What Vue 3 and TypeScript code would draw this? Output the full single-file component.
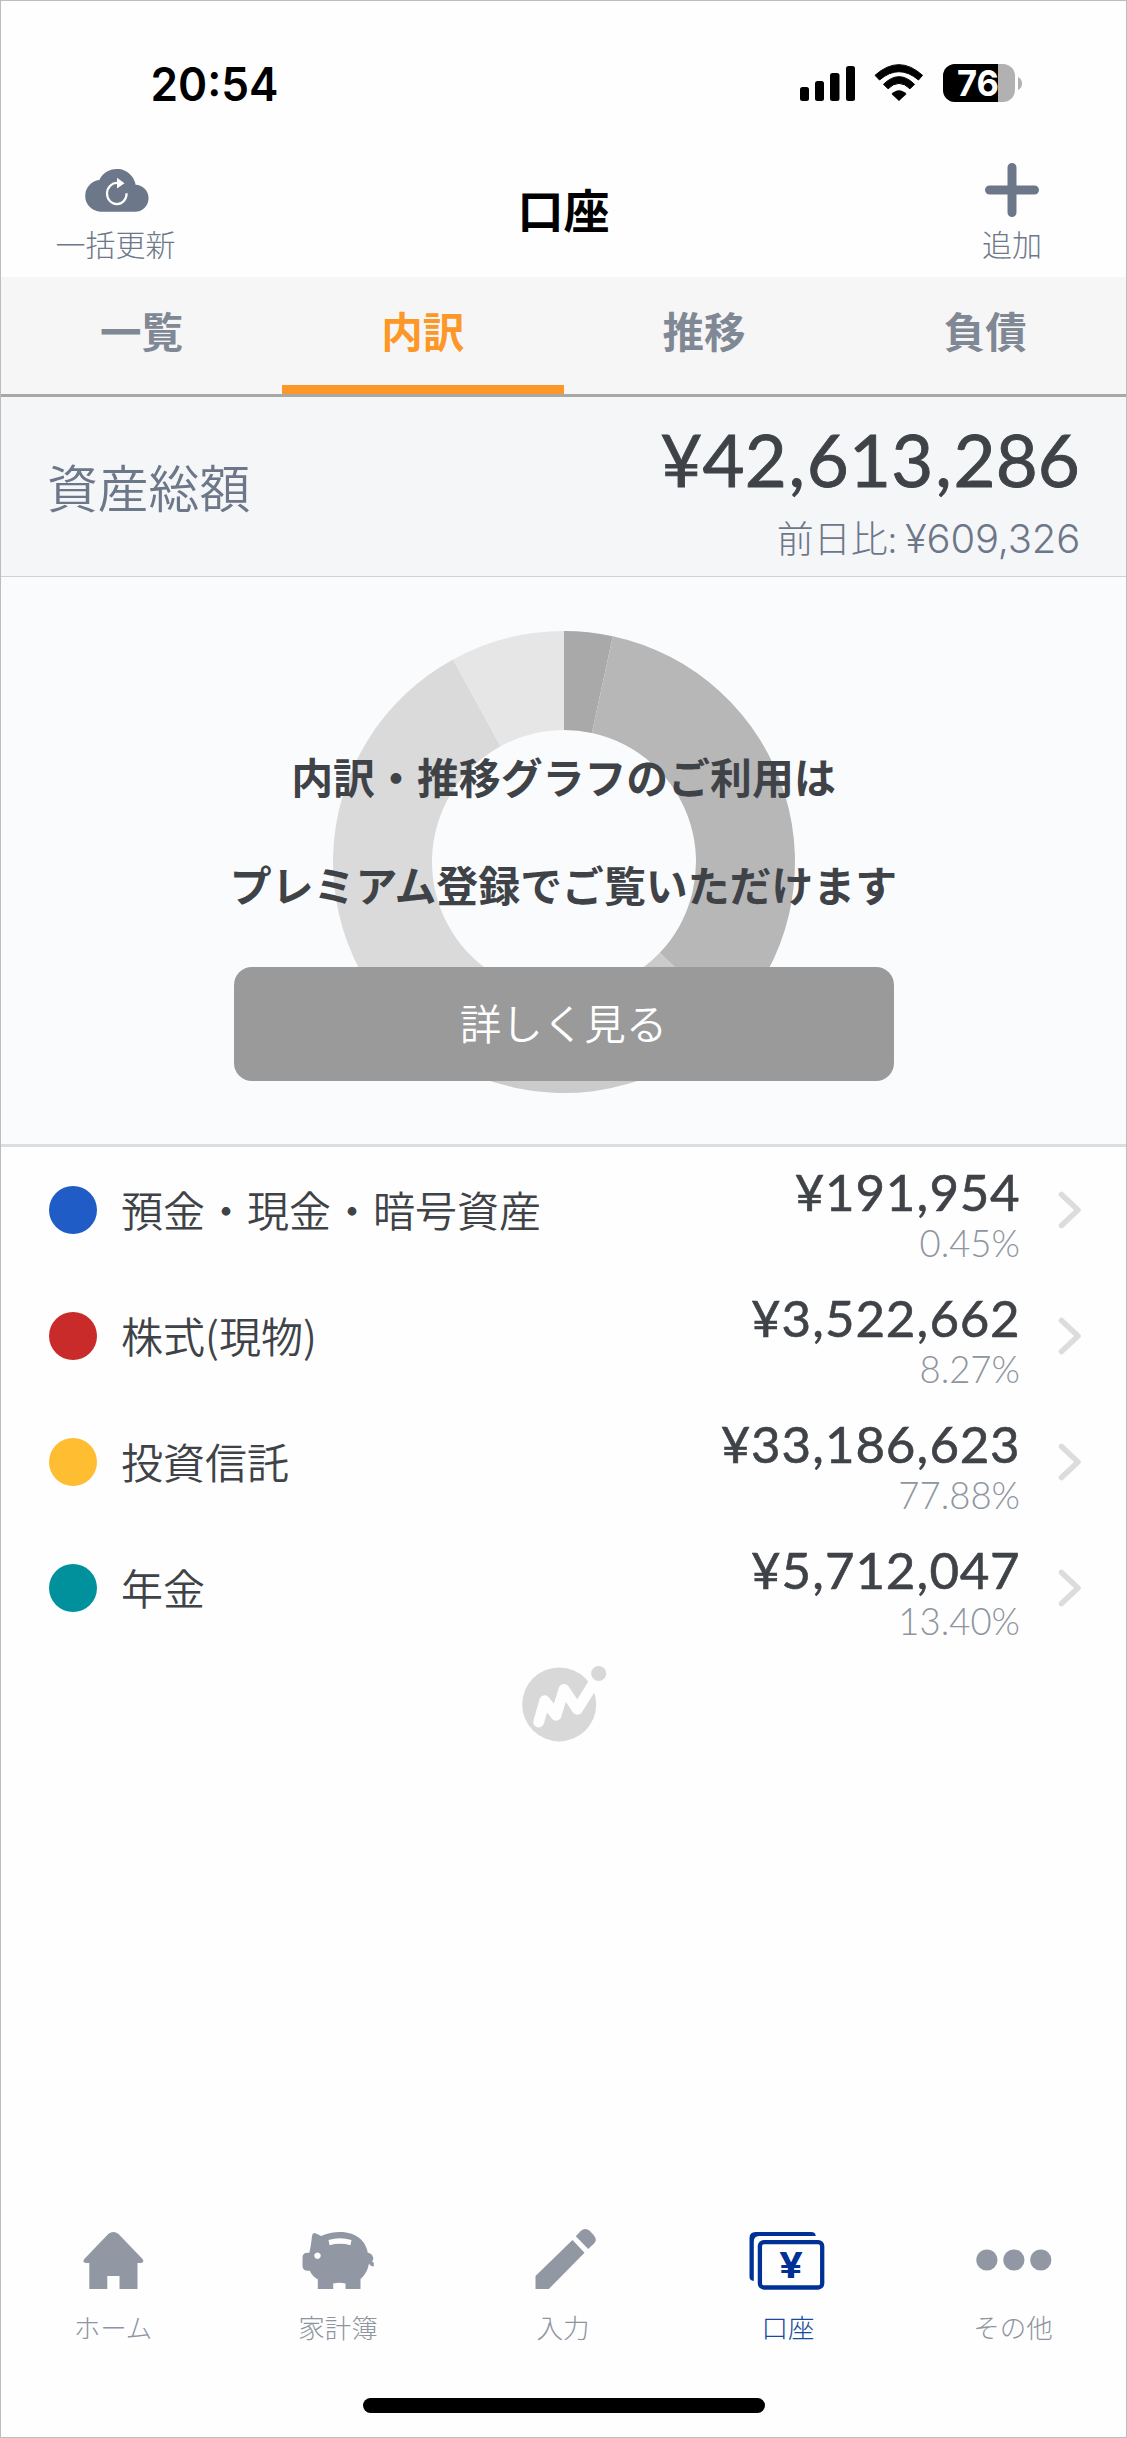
<script setup lang="ts">
interface Asset { name: string; amount: string; rate: string; color: string }

const tabs: string[] = ['一覧', '内訳', '推移', '負債']
const activeTab = '内訳'

const assets: Asset[] = [
  { name: '預金・現金・暗号資産', amount: '¥191,954', rate: '0.45%', color: '#205cc6' },
  { name: '株式(現物)', amount: '¥3,522,662', rate: '8.27%', color: '#c92a2a' },
  { name: '投資信託', amount: '¥33,186,623', rate: '77.88%', color: '#ffbe32' },
  { name: '年金', amount: '¥5,712,047', rate: '13.40%', color: '#00919d' },
]

// Centre of every glyph, counted back from the right edge: digits share one pitch, commas a narrower one
function glyphCentres(text: string, right: number, digit: number, comma: number): string {
  let edge = right
  const out: string[] = []
  for (const ch of [...text].reverse()) {
    const w = ch === ',' ? comma : digit
    out.unshift((edge - w / 2).toFixed(1))
    edge -= w
  }
  return out.join(' ')
}

function ring(from: number, to: number, outer = 231, inner = 132): string {
  const p = (deg: number, r: number) => {
    const a = (deg * Math.PI) / 180
    return `${(231 + r * Math.sin(a)).toFixed(2)} ${(231 - r * Math.cos(a)).toFixed(2)}`
  }
  const large = to - from > 180 ? 1 : 0
  return `M${p(from, outer)}A${outer} ${outer} 0 ${large} 1 ${p(to, outer)}L${p(to, inner)}A${inner} ${inner} 0 ${large} 0 ${p(from, inner)}Z`
}
const slices = [
  { d: ring(0, 12.2), fill: '#a9a9a9' },
  { d: ring(12.2, 133.5), fill: '#b7b7b7' },
  { d: ring(133.5, 212), fill: '#cbcbcb' },
  { d: ring(212, 331.3), fill: '#dadada' },
  { d: ring(331.3, 360), fill: '#e6e6e6' },
]
</script>

<template>
  <div class="screen">
    <div class="status">
      <svg class="clock" width="135" height="50" viewBox="0 0 135 50">
        <text x="0.500" y="40" textLength="128" lengthAdjust="spacingAndGlyphs">20:54</text>
      </svg>
      <svg class="signals" width="224" height="44" viewBox="0 0 224 44">
        <rect x="0" y="25" width="9" height="14" rx="2.5" />
        <rect x="15" y="19" width="9" height="20" rx="2.5" />
        <rect x="30" y="11" width="9.5" height="28" rx="2.5" />
        <rect x="46" y="4" width="9" height="35" rx="2.5" />
        <path d="M75 13.300Q99 -8 122.500 13.300L118.500 18Q99 1.400 79.500 18Z" stroke="#000" stroke-width="1" stroke-linejoin="round" />
        <path d="M83.500 22.300Q99 7 114.500 22.300L110 26.800Q99 16 88 26.800Z" stroke="#000" stroke-width="1" stroke-linejoin="round" />
        <path d="M91.500 32Q99 24.500 106.500 32L99 39Z" />
        <clipPath id="battery"><rect x="143" y="2" width="72" height="38" rx="12" /></clipPath>
        <g clip-path="url(#battery)">
          <rect x="143" y="2" width="72" height="38" fill="#b1b1b1" />
          <rect x="143" y="2" width="55" height="38" />
        </g>
        <path d="M218 15Q222 17 222 21.500Q222 26 218 28Z" fill="#b1b1b1" />
        <text x="157" y="34" class="charge" textLength="42" lengthAdjust="spacingAndGlyphs">76</text>
      </svg>
    </div>

    <header class="header">
      <div class="action left">
        <svg width="64" height="56" viewBox="0 0 64 56">
          <path d="M16.500 49.700A15.800 15.900 0 0 1 15.300 18A19.200 19.200 0 0 1 51.600 22.700A13.500 13.500 0 0 1 50.500 49.700Z" fill="#6d778a" />
          <path d="M33.500 21A9.800 10.600 0 1 0 42.600 31.300" fill="none" stroke="#fff" stroke-width="2.200" />
          <path d="M33 15.700L40.500 21.200L33 26.500Z" fill="#fff" />
        </svg>
        <span>一括更新</span>
      </div>
      <h1>口座</h1>
      <div class="action right">
        <svg width="64" height="56" viewBox="0 0 64 56">
          <path d="M32 5.500V50.500M9.500 28H54.500" stroke="#6d778a" stroke-width="9" stroke-linecap="round" />
        </svg>
        <span>追加</span>
      </div>
    </header>

    <nav class="tabs">
      <div v-for="t in tabs" :key="t" class="tab" :class="{ active: t === activeTab }">{{ t }}</div>
    </nav>

    <section class="total">
      <div class="total-label">資産総額</div>
      <div class="total-values">
        <svg width="422" height="84" viewBox="0 0 422 84">
          <text class="total-amount" :x="glyphCentres('¥42,613,286', 422, 42.2, 20)" y="71">¥42,613,286</text>
        </svg>
        <div class="diff">前日比: <span>¥609,326</span></div>
      </div>
    </section>

    <section class="chart">
      <svg class="donut" width="462" height="462" viewBox="0 0 462 462">
        <path v-for="(s, i) in slices" :key="i" :d="s.d" :fill="s.fill" />
      </svg>
      <div class="promo">
        <p>内訳・推移グラフのご利用は</p>
        <p>プレミアム登録でご覧いただけます</p>
        <button type="button">詳しく見る</button>
      </div>
    </section>

    <main class="assets">
      <div v-for="a in assets" :key="a.name" class="asset">
        <i class="dot" :style="{ background: a.color }"></i>
        <div class="name">{{ a.name }}</div>
        <div class="figures">
          <svg width="300" height="58" viewBox="0 0 300 58">
            <text class="amount" :x="glyphCentres(a.amount, 300, 30.3, 13.4)" y="48.500">{{ a.amount }}</text>
          </svg>
          <div class="rate">{{ a.rate }}</div>
        </div>
        <svg class="chevron" width="24" height="38" viewBox="0 0 24 38">
          <path d="M3.500 3.500L20 19L3.500 34.500" fill="none" stroke="#dcdcdc" stroke-width="5.500" stroke-linecap="round" stroke-linejoin="round" />
        </svg>
      </div>
      <svg class="mark" width="88" height="78" viewBox="0 0 88 78">
        <circle cx="38.200" cy="37.400" r="37" fill="#d8d8d8" />
        <path d="M17.700 55L23.700 33.700L35 48.300L43 22.300L56.300 42.300L76 11" fill="none" stroke="#fefefe" stroke-width="10.800" stroke-linecap="round" stroke-linejoin="round" />
        <circle cx="77.700" cy="6.500" r="7.600" fill="#d8d8d8" />
      </svg>
    </main>

    <footer class="bottom">
      <div class="item">
        <svg width="84" height="66" viewBox="0 0 84 66">
          <path d="M36.300 2Q41.400 -2 46.500 2L70.500 27Q73 31 68.500 31H65.500V57H47.500V44H35.300V57H17.300V31H14.300Q9.800 31 12.300 27Z" />
        </svg>
        <span>ホーム</span>
      </div>
      <div class="item">
        <svg width="84" height="66" viewBox="0 0 84 66">
          <path fill-rule="evenodd" d="M15 4Q15.500 0 19 1.500L24.200 4C42 -4 67 -1 70.800 20.700Q75 21 76.300 26Q76.300 29 75 29.500Q77 30 76.800 31.500V34.500Q73.500 34.500 72 31.500Q70.500 41 63.500 47V57H48.500V51.500Q42 50 36.200 51.500V57H20.800V47.300Q15 44 12.800 38.700H10Q5.500 38 5.500 34V25.500Q5.500 20.700 10.500 20.700H12.300Q13.800 15 15 4ZM31.500 8Q43 4.500 54.500 8L53.500 13.200Q43 10.500 32.500 13.200ZM20.500 20.500a3.200 3.200 0 1 0 .01 0Z" />
        </svg>
        <span>家計簿</span>
      </div>
      <div class="item">
        <svg width="84" height="66" viewBox="0 0 84 66">
          <path d="M50.500 8L62.500 20.700L26.800 57H13.500V44Z" />
          <path d="M53.800 4.300L58.500 -.8Q63 -5 68 -1L72 3.500Q75.500 8 72 11.500L66.200 17Z" />
        </svg>
        <span>入力</span>
      </div>
      <div class="item active">
        <svg width="84" height="66" viewBox="0 0 84 66">
          <path d="M2.500 45V6Q2.500 0 8.500 0H64Q68.700 0 68.700 4H12Q6.800 4.300 6.800 9.500V49Q2.500 48.500 2.500 45Z" fill="#003296" />
          <rect x="12.900" y="10.100" width="62.300" height="45.400" rx="4" fill="none" stroke="#003296" stroke-width="4.300" />
          <text x="32" y="46" textLength="24" lengthAdjust="spacingAndGlyphs">¥</text>
        </svg>
        <span>口座</span>
      </div>
      <div class="item">
        <svg width="84" height="66" viewBox="0 0 84 66">
          <circle cx="14.900" cy="28" r="10.600" /><circle cx="41.900" cy="28" r="10.600" /><circle cx="68.800" cy="28" r="10.600" />
        </svg>
        <span>その他</span>
      </div>
    </footer>
    <div class="home-bar"></div>
  </div>
</template>

<style>
body { margin: 0; background: #fff; }
</style>

<style scoped>
.screen {
  box-sizing: border-box; width: 1127px; height: 2438px; border: 1px solid #bdbdbd;
  display: flex; flex-direction: column; background: #fefefe; overflow: hidden;
  font-family: "Noto Sans CJK JP", sans-serif; color: #3f4348;
}
svg { display: block; flex: none; overflow: visible; }
.status { height: 148px; display: flex; padding: 0 102px 0 149px; justify-content: space-between; flex: none; }
.clock { margin-top: 60px; }
.clock text { font: 600 46px Inter, sans-serif; fill: #000; }
.signals { margin-top: 61px; }
.charge { font: 700 36px Inter, sans-serif; fill: #fff; }
.header { height: 128px; display: flex; justify-content: space-between; flex: none; }
.action { box-sizing: border-box; display: flex; flex-direction: column; align-items: center; width: 230px; padding-top: 13px; color: #6d778a; font-size: 30px; line-height: 42px; font-weight: 300; }
.action.right { padding-left: 2px; }
.header h1 { margin: 0; padding-top: 26px; font-size: 46px; line-height: 66px; font-weight: 700; color: #000; }
.action span { margin-top: 4px; }
.action.left span { margin-right: 1px; }
.tabs { height: 117px; display: flex; background: #f6f6f6; border-bottom: 3px solid #a8a8a8; flex: none; }
.tab { flex: 1; box-sizing: border-box; text-align: center; padding-top: 23px; font-size: 41.5px; line-height: 60px; font-weight: 700; color: #7f8894; border-bottom: 9px solid transparent; }
.tab.active { color: #fd9727; border-color: #fd9727; }
.total { height: 179px; display: flex; justify-content: space-between; background: #f5f6f8; border-bottom: 1px solid #cfd1d4; padding: 0 46px; flex: none; color: #6d778a; }
.total-label { font-size: 50.800px; font-weight: 350; line-height: 72px; padding-top: 53px; }
.total-values { display: flex; flex-direction: column; align-items: flex-end; margin-top: 19px; }
.total-amount { font: 400 72.500px Lato, sans-serif; fill: #3f4348; stroke: #3f4348; stroke-width: .9; text-anchor: middle; }
.diff { font-size: 37px; line-height: 52px; font-weight: 300; white-space: nowrap; margin-top: 11px; }
.diff span { font: 300 40px Inter, sans-serif; letter-spacing: -0.200px; }
.chart { height: 567px; position: relative; background: #fafbfd; border-bottom: 3px solid #dcdddf; flex: none; }
.donut { position: absolute; left: 332px; top: 54px; }
.promo { position: relative; display: flex; flex-direction: column; align-items: center; padding-top: 169px; }
.promo p { margin: 0 0 48px; font-size: 41.900px; line-height: 60px; font-weight: 700; white-space: nowrap; }
.promo button { width: 660px; height: 114px; border: 0; border-radius: 18px; padding: 0 0 5px; margin-top: 5px; background: #9a9a9a; color: #fff; font: 350 41.500px "Noto Sans CJK JP", sans-serif; }
.assets { flex: 1; }
.asset { height: 126px; display: flex; align-items: center; padding: 0 44px 0 48px; }
.dot { width: 48px; height: 48px; border-radius: 50%; flex: none; }
.name { margin-left: 24px; font-size: 42px; line-height: 60px; padding-bottom: 3px; font-weight: 350; flex: 1; white-space: nowrap; }
.figures { display: flex; flex-direction: column; align-items: flex-end; height: 126px; }
.figures svg { margin-top: 15px; }
.amount { font: 400 51px Lato, sans-serif; fill: #3f4348; stroke: #3f4348; stroke-width: .6; text-anchor: middle; }
.rate { font: 300 36.500px/42px Lato, sans-serif; color: #8e959e; margin-top: 2px; }
.chevron { margin-left: 38px; }
.mark { margin: 16px 0 0 520px; }
.bottom { height: 150px; display: flex; flex: none; color: #8e959e; }
.item { flex: 1; display: flex; flex-direction: column; align-items: center; font-size: 26.500px; line-height: 38px; font-weight: 300; }
.item svg { fill: #9198a3; }
.item span { margin: 10px 1px 0 0; }
.item.active { color: #174a9f; }
.item text { font: 700 36px Inter, sans-serif; fill: #003296; }
.home-bar { width: 402px; height: 15px; border-radius: 8px; background: #000; margin: 16px auto 24px; flex: none; }
</style>
